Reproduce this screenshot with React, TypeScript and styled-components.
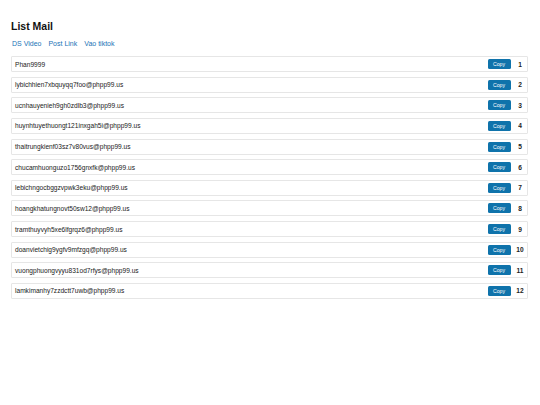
import React from 'react';
import styled, { createGlobalStyle } from 'styled-components';

const mails = [
  'Phan9999',
  'lybichhien7xbquyqq7foo@phpp99.us',
  'ucnhauyenieh9gh0zdlb3@phpp99.us',
  'huynhtuyethuongt121inxgah5i@phpp99.us',
  'thaitrungkienf03sz7v80vus@phpp99.us',
  'chucamhuonguzo1756gnxfk@phpp99.us',
  'lebichngocbggzvpwk3eku@phpp99.us',
  'hoangkhatungnovt50sw12@phpp99.us',
  'tramthuyvyh5xe6lfgrqz6@phpp99.us',
  'doanvietchig9ygfv9mfzgq@phpp99.us',
  'vuongphuongvyyu831od7rfys@phpp99.us',
  'lamkimanhy7zzdctt7uwb@phpp99.us',
];

const links = ['DS Video', 'Post Link', 'Vao tiktok'];

function App() {
  return (
    <>
      <GlobalStyle />
      <Page>
        <Title>List Mail</Title>
        <Nav>
          {links.map((l) => (
            <NavLink key={l} href="#">{l}</NavLink>
          ))}
        </Nav>
        <List>
          {mails.map((m, i) => (
            <Row key={m}>
              <Mail>{m}</Mail>
              <CopyButton type="button">Copy</CopyButton>
              <Index>{i + 1}</Index>
            </Row>
          ))}
        </List>
      </Page>
    </>
  );
}

const GlobalStyle = createGlobalStyle`
  body {
    margin: 0;
    background: #fff;
    font-family: "Liberation Sans", Arial, sans-serif;
  }
  * {
    box-sizing: border-box;
  }
`;
const Page = styled.div`
  padding: 20px 12px 0 11px;
`;
const Title = styled.h1`
  margin: 0;
  font-size: 10.5px;
  line-height: 13px;
  font-weight: 700;
  color: #111;
`;
const Nav = styled.div`
  display: flex;
  gap: 7px;
  margin-top: 6px;
  padding-left: 1px;
`;
const NavLink = styled.a`
  font-size: 7px;
  line-height: 9px;
  color: #1a73b6;
  text-decoration: none;
`;
const List = styled.div`
  display: flex;
  flex-direction: column;
  gap: 4.64px;
  margin-top: 8px;
`;
const Row = styled.div`
  display: flex;
  align-items: center;
  height: 16px;
  border: 1px solid #e6e6e6;
  border-radius: 1px;
  padding: 0 1.5px 0 3px;
`;
const Mail = styled.span`
  flex: 1;
  font-size: 6.6px;
  color: #222;
`;
const CopyButton = styled.button`
  width: 23px;
  height: 10px;
  padding: 0;
  border: none;
  border-radius: 1.5px;
  background: #0f73ab;
  color: #fff;
  font-family: inherit;
  font-size: 5.2px;
  line-height: 10px;
`;
const Index = styled.span`
  width: 11px;
  margin-left: 4px;
  text-align: center;
  font-size: 6.6px;
  font-weight: 700;
  color: #222;
`;

export default App;
